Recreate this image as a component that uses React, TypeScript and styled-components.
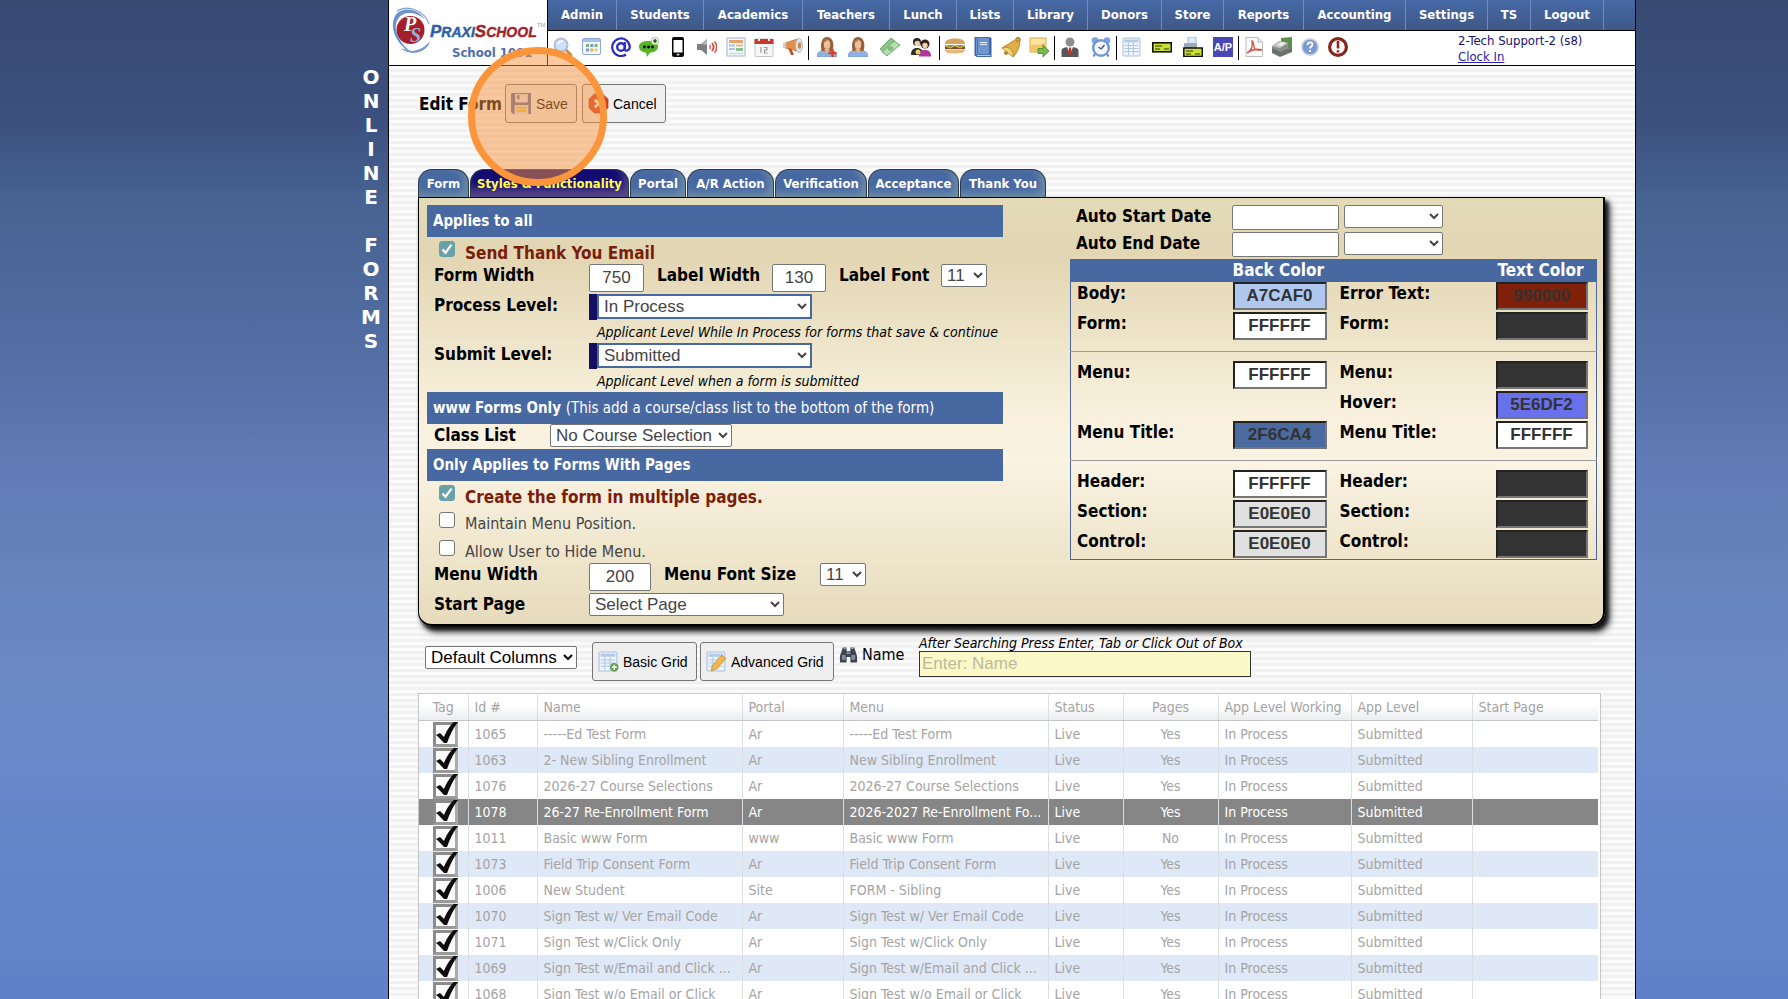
import React from "react";
import styled, { createGlobalStyle, css } from "styled-components";

const TAHOMA = `Tahoma, "DejaVu Sans Condensed", "DejaVu Sans", sans-serif`;
const ARIAL = `"Liberation Sans", Arial, sans-serif`;
const BLUE = "#4868a2";

const Global = createGlobalStyle`
  *, *::before, *::after { box-sizing: border-box; }
  body { margin: 0; font-family: ${TAHOMA}; font-size: 14px; color: #000; }
`;

/* ---------- page frame ---------- */

const Page = styled.div`
  position: relative;
  display: grid;
  grid-template-columns: 388px minmax(0, 1fr) 152px;
  height: 100vh;
  overflow: hidden;
  background: linear-gradient(#364a72 0%, #3c507f 12%, #466391 20%, #536ea3 35%, #607bb7 47%, #6784bf 58%, #6a8ac6 70%, #6686ca 82%, #6080c9 100%);
`;

const SideTitle = styled.h1`
  margin: 0;
  padding: 65px 6px 0 0;
  display: flex;
  flex-direction: column;
  align-items: flex-end;
  font-family: Verdana, "DejaVu Sans", sans-serif;
  font-size: 20px;
  line-height: 24px;
  color: #fff;
`;

const SideLetter = styled.span`
  width: 22px;
  height: 24px;
  text-align: center;
`;

const Sheet = styled.main`
  border: solid #000;
  border-width: 0 1px;
  background: repeating-linear-gradient(#fafafa 0 3px, #f1f1f1 3px 6px);
  overflow: hidden;
`;

/* ---------- header ---------- */

const Header = styled.header`
  display: grid;
  grid-template-columns: 159px minmax(0, 1fr);
  height: 66px;
  background: #fff;
  border-bottom: 1px solid #000;
`;

const Brand = styled.a`
  display: grid;
  grid-template-columns: 38px 1fr;
  border-right: 1px solid #000;
  padding-left: 3px;
  text-decoration: none;
`;

const BrandText = styled.span`
  display: flex;
  flex-direction: column;
  padding-top: 22px;
`;

const BrandName = styled.span`
  font: italic bold 14px/20px ${ARIAL};
  color: #2c5fa6;
  white-space: nowrap;
  -webkit-text-stroke: 0.4px;
  b { font-size: 17px; }
  i { color: #a31f2a; }
  sup { font: 6px/6px ${ARIAL}; color: #8aa6cc; -webkit-text-stroke: 0; vertical-align: top; }
`;

const SchoolName = styled.span`
  padding-left: 22px;
  font-size: 13px;
  font-weight: bold;
  line-height: 22px;
  color: #4c6fb0;
`;

const MenuBar = styled.nav`
  display: grid;
  grid-template-columns: 69px 87px 99px 87px 67px 57px 74px 74px 62px 80px 102px 82px 43px 73px 1fr;
  height: 31px;
  background: linear-gradient(#4669a6, #3f5887);
  border-bottom: 1px solid #000;
`;

const MenuLink = styled.a`
  display: flex;
  align-items: center;
  justify-content: center;
  padding-bottom: 2px;
  border-right: 1px solid #6f8cc0;
  font-size: 13px;
  font-weight: bold;
  color: #fff;
  text-decoration: none;
`;

const ToolBar = styled.div`
  display: flex;
  align-items: flex-start;
  height: 34px;
`;

const ToolGroup = styled.div<{ $w: number; $pad?: number }>`
  display: flex;
  justify-content: space-between;
  width: ${(p) => p.$w}px;
  padding: 6px ${(p) => p.$pad ?? 5}px 0;
`;

const ToolRule = styled.i`
  width: 1px;
  height: 24px;
  margin-top: 5px;
  background: #000;
`;

const IconButton = styled.button`
  width: 20px;
  height: 20px;
  padding: 0;
  border: 0;
  background: none;
  svg { display: block; width: 20px; height: 20px; }
`;

const UserBox = styled.div`
  margin-left: auto;
  width: 177px;
  padding-top: 2px;
  display: flex;
  flex-direction: column;
  font-size: 13px;
  line-height: 16px;
  color: #171270;
  a { color: #2a20b0; }
`;

/* ---------- title row ---------- */

const TitleRow = styled.div`
  display: flex;
  align-items: center;
  gap: 5px;
  padding: 18px 0 0 30px;
`;

const Title = styled.h2`
  margin: 0;
  width: 81px;
  white-space: nowrap;
  font-size: 17px;
  line-height: 20px;
`;

const ActionButton = styled.button<{ $w: number }>`
  display: flex;
  align-items: center;
  gap: 4px;
  width: ${(p) => p.$w}px;
  height: 39px;
  padding: 0 0 0 5px;
  border: 1px solid #767676;
  border-radius: 3px;
  background: #efefef;
  font: 14px/16px ${ARIAL};
  color: #000;
  white-space: nowrap;
  svg { width: 21px; height: 21px; flex: none; }
`;

/* ---------- tabs ---------- */

const Tabs = styled.div`
  display: grid;
  grid-template-columns: 51px 159px 56px 87px 92px 91px 86px;
  gap: 1px;
  margin: 46px 0 0 29px;
`;

const Tab = styled.button<{ $on?: boolean }>`
  height: 28px;
  padding: 0;
  border: 1px solid #2a3a4c;
  border-bottom: 0;
  border-radius: 14px 14px 0 0;
  background: ${BLUE};
  box-shadow: inset -4px -4px 8px #7090a8;
  font: bold 13px/26px ${TAHOMA};
  color: #fff;
  white-space: nowrap;
  ${(p) =>
    p.$on &&
    css`
      background: #140c70;
      box-shadow: inset -4px -8px 10px #57498a;
      color: #ffff4d;
    `}
`;

const Panel = styled.section`
  display: flex;
  justify-content: space-between;
  margin: 0 30px 0 29px;
  padding: 7px 6px 8px 8px;
  border: 1px solid #000;
  border-width: 1px 2px 2px 1px;
  border-radius: 0 0 14px 14px;
  background: linear-gradient(#e3dab8 0%, #e2d6b3 14%, #f8f0dc 50%, #faf3e2 62%, #e6dbbb 100%);
  box-shadow: 3px 4px 4px #111, 5px 6px 7px #555;
`;

const LeftCol = styled.div`
  width: 576px;
`;

const SectionBar = styled.h3`
  margin: 0;
  height: 32px;
  padding-left: 6px;
  background: ${BLUE};
  color: #fff;
  font-size: 15px;
  line-height: 33px;
  span { font-weight: normal; }
`;

const Row = styled.div<{ $h: number }>`
  display: flex;
  align-items: flex-start;
  height: ${(p) => p.$h}px;
  padding-left: 7px;
`;

const Label = styled.label<{ $w?: number }>`
  flex: none;
  width: ${(p) => (p.$w ? p.$w + "px" : "auto")};
  font-size: 17px;
  font-weight: bold;
  line-height: 22px;
  white-space: nowrap;
`;

const CheckLabel = styled.label<{ $strong?: boolean }>`
  display: flex;
  align-items: flex-start;
  gap: 10px;
  padding: 4px 0 0 5px;
  font-size: ${(p) => (p.$strong ? 17 : 16)}px;
  line-height: 24px;
  color: #444;
  ${(p) => p.$strong && css`font-weight: bold; color: #7a1d0a;`}
`;

const Check = styled.input`
  appearance: none;
  grid-area: 1 / 1;
  width: 16px;
  height: 16px;
  margin: 0;
  border: 1px solid #767676;
  border-radius: 3px;
  background: #fff;
  &:checked { background: #69a1ab; border-color: #69a1ab; }
`;

const CheckBox = styled.span`
  display: grid;
  svg { grid-area: 1 / 1; width: 16px; height: 16px; pointer-events: none; }
`;

const NumberBox = styled.input<{ $w: number }>`
  width: ${(p) => p.$w}px;
  height: 28px;
  margin-right: 13px;
  padding: 0;
  border: 1px solid #767676;
  border-radius: 2px;
  font: 17px ${ARIAL};
  color: #444;
  text-align: center;
`;

const Select = styled.select<{ $w: number; $dark?: boolean }>`
  width: ${(p) => p.$w}px;
  height: 23px;
  padding: 0 0 0 1px;
  border: 1px solid #767676;
  border-radius: 2px;
  background-color: #fff;
  font: 17px ${ARIAL};
  color: ${(p) => (p.$dark ? "#000" : "#444")};
`;

const LevelWrap = styled.span`
  display: flex;
  height: 26px;
  border-left: 8px solid #150e62;
`;

const LevelSelect = styled(Select)`
  height: 25px;
  border: 2px solid ${BLUE};
  border-radius: 0;
`;

const Note = styled.p`
  margin: 0;
  padding: 3px 0 0 170px;
  height: 23px;
  font-size: 14px;
  font-style: italic;
  line-height: 18px;
  white-space: nowrap;
`;

/* ---------- colour settings ---------- */

const RightCol = styled.div`
  width: 527px;
`;

const DateRow = styled.div`
  display: flex;
  align-items: flex-start;
  gap: 5px;
  height: 27px;
  padding-left: 6px;
`;

const DateBox = styled.input`
  width: 107px;
  height: 25px;
  border: 1px solid #767676;
  border-radius: 2px;
`;

const ColorTable = styled.table`
  width: 100%;
  table-layout: fixed;
  border-collapse: collapse;
  border: 1px solid ${BLUE};
  th, td { padding: 0; text-align: left; vertical-align: top; }
  th { height: 22px; background: ${BLUE}; color: #fff; font-size: 17px; line-height: 21px; white-space: nowrap; }
  th:last-child { padding-left: 2px; }
  tr.first > td { border-top: 1px solid #999; padding-top: 9px; height: 39px; }
  tr.last > td { height: 40px; }
  td { height: 30px; }
`;

const ColorLabel = styled.label`
  padding-left: 6px;
  font-size: 17px;
  font-weight: bold;
  line-height: 22px;
`;

const ColorBox = styled.input<{ $bg: string; $short?: boolean }>`
  display: block;
  width: ${(p) => (p.$short ? 92 : 94)}px;
  height: 28px;
  padding: 0;
  border: 2px solid;
  border-color: #222 #767676 #767676 #222;
  background: ${(p) => p.$bg};
  font: bold 17px ${ARIAL};
  color: #333;
  text-align: center;
`;

/* ---------- grid controls ---------- */

const GridBar = styled.div`
  display: flex;
  align-items: flex-start;
  height: 67px;
  padding: 9px 0 0 36px;
`;

const ColumnsSelect = styled(Select)`
  margin: 11px 15px 0 0;
`;

const GridButtons = styled.div`
  display: flex;
  gap: 3px;
  margin: 7px 5px 0 0;
`;

const NameLabel = styled.label`
  display: flex;
  gap: 4px;
  width: 80px;
  margin-top: 9px;
  font-size: 16px;
  line-height: 22px;
  svg { width: 19px; height: 22px; }
`;

const Search = styled.div`
  width: 332px;
`;

const SearchHint = styled.div`
  font-size: 14px;
  font-style: italic;
  line-height: 16px;
  white-space: nowrap;
`;

const SearchBox = styled.input`
  display: block;
  width: 100%;
  height: 26px;
  padding: 0 2px;
  border: 1px solid #333;
  background: #fcf9c8;
  font: 17px ${ARIAL};
  &::placeholder { color: #bbb99a; }
`;

/* ---------- data grid ---------- */

const GridFrame = styled.div`
  margin: 0 34px 0 29px;
  padding: 1px 2px 0 0;
  border: 1px solid #c4c6c8;
  background: #fff;
`;

const DataTable = styled.table`
  width: 100%;
  table-layout: fixed;
  border-collapse: collapse;
  font-size: 14px;
  color: #a4a4a4;
  th { height: 25px; padding: 0 6px; font-weight: normal; text-align: left; background: linear-gradient(#fff 40%, #ebedef); border-bottom: 1px solid #c4c6c8; white-space: nowrap; }
  td { height: 26px; padding: 0 6px; overflow: hidden; text-overflow: ellipsis; white-space: nowrap; line-height: 18px; }
  th + th, td + td { border-left: 1px solid #dcdfe2; }
  th:nth-child(1), th:nth-child(7), td:nth-child(7) { text-align: center; }
  td:nth-child(1) { padding: 0 0 0 14px; }
`;

const DataRow = styled.tr<{ $alt?: boolean; $on?: boolean }>`
  background: ${(p) => (p.$on ? "#868686" : p.$alt ? "#dfe8f6" : "#fff")};
  color: ${(p) => (p.$on ? "#fff" : "inherit")};
`;

const TagBox = styled.span`
  display: grid;
  width: 26px;
  height: 26px;
  svg { grid-area: 1 / 1; width: 26px; height: 26px; pointer-events: none; }
`;

const TagCheck = styled.input`
  appearance: none;
  grid-area: 1 / 1;
  width: 25px;
  height: 25px;
  margin: 1px 0 0 0;
  border: 3px solid;
  border-color: #8c8c8c #aaa #9a9a9a #8c8c8c;
  background: #fafafa;
`;

/* ---------- click highlight ---------- */

const ClickRing = styled.div`
  position: absolute;
  left: 468px;
  top: 47px;
  width: 139px;
  height: 139px;
  border: 7px solid #fb953c;
  border-radius: 50%;
  background: rgba(247, 148, 64, 0.5);
  pointer-events: none;
`;

/* ---------- icons ---------- */

const Svg = ({ children, box = "0 0 20 20" }: { children: React.ReactNode; box?: string }) => (
  <svg viewBox={box} aria-hidden="true">{children}</svg>
);

const Woman = ({ plus }: { plus?: boolean }) => (
  <Svg>
    <path d="M0 20c0-5 3-7 10-7s10 2 10 7z" fill="#8fb0e2" stroke="#6c8fc6" strokeWidth=".6" />
    <path d="M4.500 14C3 6 5 0 10 0s8 6 5.500 14z" fill="#95603c" />
    <path d="M7 12l3 4 3-4z" fill="#e9b68a" />
    <ellipse cx="10" cy="7.500" rx="3.200" ry="4.500" fill="#eebf98" />
    <path d="M6 6c2-1 4-2 5-4 1 2 2 3 3 4-1-5-7-6-8 0z" fill="#a87550" />
    {plus && <path d="M15.500 12v8M11.500 16h8" stroke="#e23a2e" strokeWidth="2.400" />}
  </Svg>
);

const GridSheet = ({ children }: { children?: React.ReactNode }) => (
  <Svg>
    <rect x="1" y="1" width="17" height="18" rx="1" fill="#eef4fc" stroke="#a9bfdd" />
    <rect x="2.500" y="2.500" width="14" height="3" fill="#b5cbe8" />
    <path d="M2.500 8.500h14M2.500 11.500h14M2.500 14.500h14M6.500 6v12M11.500 6v12" stroke="#b3c7e2" />
    {children}
  </Svg>
);

const icons: Record<string, React.ReactNode> = {
  Search: (
    <Svg><path d="M12 12l6 6" stroke="#c98d4a" strokeWidth="3" strokeLinecap="round" /><circle cx="8" cy="8" r="6.500" fill="#cfe1f7" stroke="#aebfda" strokeWidth="2" /><path d="M5 7c1-3 3-3 5-3" stroke="#fff" strokeWidth="1.500" fill="none" /></Svg>
  ),
  Dashboard: (
    <Svg><rect x=".5" y="1.500" width="18" height="16" rx="1.500" fill="#f4f8fe" stroke="#8aa8d8" /><path d="M1 3.500h17" stroke="#a8c0e4" strokeWidth="3" /><path d="M4 8.500h3M12.500 8.500h3" stroke="#7fb37a" strokeWidth="3" /><path d="M8.300 8.500h3M4 13h3" stroke="#6f9be0" strokeWidth="3" /><path d="M8.300 13h3" stroke="#e2b24d" strokeWidth="3" /><path d="M12.500 13h3" stroke="#e0d27a" strokeWidth="3" /></Svg>
  ),
  Email: (
    <Svg><circle cx="10" cy="10" r="3.800" fill="none" stroke="#2c2cc4" strokeWidth="2.400" /><path d="M13.800 5v7c0 3 5 2 5-2.500A8.800 8.800 0 1 0 15 17.500" fill="none" stroke="#2c2cc4" strokeWidth="2.200" /></Svg>
  ),
  Chat: (
    <Svg><path d="M9.500 4C4 4 0 6 0 9.500S3 15.500 7 15.500l1 4.500 3-4.500c5 0 8-2.500 8-6S15 4 9.500 4z" fill="#55b524" /><circle cx="5.500" cy="10" r="1.400" /><circle cx="9.500" cy="10" r="1.400" /><circle cx="13.500" cy="10" r="1.400" /><circle cx="16" cy="4" r="3.800" fill="#e8f5df" stroke="#7cb85c" strokeWidth=".6" /><path d="M16 2v4M14 4h4" stroke="#222" strokeWidth="1.200" /></Svg>
  ),
  Phone: (
    <Svg><rect x="4" y="0" width="12" height="20" rx="2" fill="#0b0b0b" /><rect x="5.500" y="3" width="9" height="12.500" fill="#fff" /><rect x="8.500" y="16.800" width="3" height="1.600" rx=".8" fill="#ddd" /></Svg>
  ),
  Speaker: (
    <Svg><path d="M0 7h4l6-5v16l-6-5H0z" fill="#7d7f82" /><path d="M4 7l6-5v6z" fill="#b2b4b6" /><path d="M12.500 8c1 1 1 3 0 4" stroke="#e07d76" strokeWidth="1.800" fill="none" /><path d="M15 6c2 2.500 2 5.500 0 8" stroke="#d9544c" strokeWidth="2" fill="none" /><path d="M17.500 4.500c3 3 3 8 0 11" stroke="#d9544c" strokeWidth="1.600" fill="none" /></Svg>
  ),
  Schedule: (
    <Svg><rect x="1" y="1" width="18" height="18" fill="#f6f9fd" stroke="#9cb4d8" /><path d="M3 4.500h14" stroke="#e8a468" strokeWidth="3" /><path d="M3 8.500h6M3 12h6" stroke="#a8c2e6" strokeWidth="2" /><path d="M10 8.500h7" stroke="#ecb78a" strokeWidth="2" /><path d="M10 12.500h7" stroke="#8cbf8e" strokeWidth="3" /><path d="M3 16.500h14" stroke="#c9d7ea" strokeWidth="1.500" /></Svg>
  ),
  Calendar: (
    <Svg><rect x="1" y="2" width="18" height="17.500" rx="1" fill="#f7f7f7" stroke="#c4c4c4" /><path d="M.5 2h19v5H.5z" fill="#c9382a" /><path d="M5 0v4M15 0v4" stroke="#eee" strokeWidth="2" /><path d="M7 10v6M10 10.500h3v2.500h-2.500v3h3" stroke="#999" strokeWidth="1.200" fill="none" /></Svg>
  ),
  Announce: (
    <Svg><path d="M2 6l12-4v12L2 11z" fill="#e2924c" stroke="#b5672c" strokeWidth=".6" /><path d="M0 6h3v5H0z" fill="#c7cdd4" /><path d="M5 11l3 7h3l-2.500-6z" fill="#b4552a" /><ellipse cx="16" cy="8.500" rx="3.500" ry="7" fill="#dfe4ea" stroke="#a5adb6" strokeWidth=".8" /><ellipse cx="16.500" cy="8.500" rx="1.600" ry="3.200" fill="#c9874e" /></Svg>
  ),
  "Add Parent": <Woman plus />,
  Parent: <Woman />,
  Money: (
    <Svg><path d="M0 12L11 1l4 3L4 15z" fill="#8cc48a" stroke="#5d9c60" strokeWidth=".8" /><path d="M2 15L14 4l6 4L7 19z" fill="#b4dcae" stroke="#5d9c60" strokeWidth=".8" /><ellipse cx="10.500" cy="11.500" rx="2.800" ry="2.200" fill="#7db97c" /></Svg>
  ),
  Family: (
    <Svg><circle cx="6" cy="5" r="4" fill="#2b2320" /><circle cx="6.300" cy="6.500" r="2.700" fill="#f0cfae" /><path d="M0 18c0-5 2-7 6-7s6 2 6 7z" fill="#2d2d33" /><circle cx="14" cy="7" r="4.500" fill="#33231c" /><circle cx="14" cy="8.500" r="2.700" fill="#f3d2b0" /><path d="M8 19.500c0-5 2-6.500 6-6.500s6 2 6 6.500z" fill="#b2349e" /><circle cx="7" cy="15" r="2.500" fill="#f0d05a" /></Svg>
  ),
  Burger: (
    <Svg><path d="M0 7c0-4 4-5.500 10-5.500S20 3 20 7z" fill="#d9a35c" /><path d="M0 8h20v2H0z" fill="#7fae4a" /><path d="M0 9.500h20v2.500H0z" fill="#7a4a28" /><path d="M0 8.500l5 2.500 5-2.500 5 2.500 5-2.500" fill="none" stroke="#f0d050" /><path d="M0 12.500h20c0 3-3 4-10 4S0 15.500 0 12.500z" fill="#e2b878" /></Svg>
  ),
  Library: (
    <Svg><path d="M1.500 0h15l2 1v19H4l-2.500-1.500z" fill="#3c66a4" /><path d="M3 .8h13v16.500H3z" fill="#6d96d0" /><path d="M4.500 .8v16.500" stroke="#4a72ae" /><path d="M7 5.500h7M7 7.500h7" stroke="#e3edf9" /><path d="M4 18.500h13.500" stroke="#dde6f2" strokeWidth=".8" /></Svg>
  ),
  Bell: (
    <Svg><path d="M17 1L1 11l11 9c3-3 7-8 7-18z" fill="#dfae48" stroke="#a8761e" strokeWidth=".8" /><path d="M1.500 11C6 8 14 13 12 19.500" fill="#f2d27a" stroke="#a8761e" strokeWidth=".8" /><circle cx="17" cy="2.500" r="2" fill="none" stroke="#b5842a" strokeWidth="1.200" /><circle cx="5" cy="16" r="2" fill="#b5842a" /></Svg>
  ),
  Export: (
    <Svg><rect x="1" y="1" width="16" height="14" fill="#fbe3a0" stroke="#dbaa50" /><path d="M1 10c4-5 8 0 16-5v10H1z" fill="#f3c46a" /><path d="M9 11.500h5V8l6 6-6 6v-3.500H9z" fill="#78b84c" stroke="#3f8a22" strokeWidth=".8" /></Svg>
  ),
  Staff: (
    <Svg><circle cx="10" cy="5" r="4.500" fill="#8b8d90" /><path d="M1.500 20v-6c0-3 3-4 8.500-4s8.500 1 8.500 4v6z" fill="#55575a" /><path d="M7 10h6l-3 8z" fill="#f2f2f2" /><path d="M9.200 10.500h1.600l1 5-1.800 3-1.800-3z" fill="#cf2a26" /></Svg>
  ),
  Alarm: (
    <Svg><circle cx="4" cy="3.500" r="3.300" fill="#7da2dc" /><circle cx="16" cy="3.500" r="3.300" fill="#7da2dc" /><path d="M4 17l-1.500 2.500M16 17l1.500 2.500" stroke="#5e83bd" strokeWidth="2" /><circle cx="10" cy="11" r="7.800" fill="#f4f9ff" stroke="#6f97d3" strokeWidth="2.400" /><path d="M10 12l3.500-4M10 12L7.500 10" stroke="#3b5272" strokeWidth="1.300" /></Svg>
  ),
  Ledger: <GridSheet />,
  Check: (
    <Svg><rect x=".8" y="5.800" width="18.500" height="9" fill="#c9e02c" stroke="#111" strokeWidth="1.600" /><path d="M3 9h7M3 12h5M12 12h5" stroke="#333" strokeWidth="1.200" /></Svg>
  ),
  "Print Check": (
    <Svg><path d="M5 0h8v8H5z" fill="#dce9f8" stroke="#8fa5c2" strokeWidth=".8" /><rect x="1" y="6" width="13" height="7" rx="1" fill="#9aa8b8" /><rect x=".8" y="11" width="18.500" height="8.500" fill="#c9e02c" stroke="#111" strokeWidth="1.500" /><path d="M3 14h7M3 17h5M12 17h5" stroke="#333" strokeWidth="1.200" /></Svg>
  ),
  "Accounts Payable": (
    <Svg><rect width="20" height="20" fill="#4a48b4" /><text x="10" y="14" textAnchor="middle" fontFamily="Liberation Sans, sans-serif" fontWeight="bold" fontSize="11" fill="#fff">A/P</text></Svg>
  ),
  Pdf: (
    <Svg><path d="M2 .5h12l4.500 4.500v14.500H2z" fill="#fafafa" stroke="#bdbdbd" /><path d="M14 .5v4.500h4.500" fill="#e4e4e4" stroke="#bdbdbd" /><path d="M8 4c2 0 1 6 3 8s4 1 7 1c-6-2-11 0-15 3 4-2 6-6 5-12z" fill="none" stroke="#cf5a50" strokeWidth="1.400" /></Svg>
  ),
  Scanner: (
    <Svg><path d="M9 1l11-1v11L9 13z" fill="#5a8f4c" /><path d="M0 9l7-5 9 2v7l-9 5-7-4z" fill="#8b8f8c" /><path d="M0 9l7-5 9 2-8 5z" fill="#c3c7c3" /><path d="M0 11l8 4 12-5v5l-12 5-8-4z" fill="#6c716d" /><path d="M5 8l5-3 4 1-5 3z" fill="#eef3ea" /></Svg>
  ),
  Help: (
    <Svg><circle cx="10" cy="10" r="9" fill="#c8d2e2" /><circle cx="10" cy="10" r="7.300" fill="#7b9bd0" /><path d="M7.500 8c0-3.500 5-3.500 5-.5 0 2-2.500 2-2.500 4M10 13v2" stroke="#fff" strokeWidth="1.800" fill="none" /></Svg>
  ),
  Alert: (
    <Svg><circle cx="10" cy="10" r="8.400" fill="#fff" stroke="#86261a" strokeWidth="3.200" /><path d="M10 4v7.500M10 13.200v2.400" stroke="#86261a" strokeWidth="2.600" /></Svg>
  ),
};

const toolGroups: { w: number; pad?: number; tools: string[] }[] = [
  { w: 260, tools: ["Search", "Dashboard", "Email", "Chat", "Phone", "Speaker", "Schedule", "Calendar", "Announce"] },
  { w: 130, pad: 8, tools: ["Add Parent", "Parent", "Money", "Family"] },
  { w: 114, tools: ["Burger", "Library", "Bell", "Export"] },
  { w: 61, tools: ["Staff", "Alarm"] },
  { w: 121, tools: ["Ledger", "Check", "Print Check", "Accounts Payable"] },
  { w: 114, tools: ["Pdf", "Scanner", "Help", "Alert"] },
];

const EmblemSvg = styled.svg`
  width: 40px;
  height: 48px;
  margin-top: 7px;
  overflow: visible;
`;

const Emblem = () => (
  <EmblemSvg viewBox="0 0 40 48" aria-hidden="true">
    <ellipse cx="18.500" cy="23" rx="14" ry="14" fill="#a51f2b" />
    <path d="M33 13C27 1 9-1 3 9-3 20 4 39 21 46 7 37 0 21 6 12 11 4 25 4 33 13z" fill="#6d93cc" />
    <path d="M38 34C34 47 18 49 8 41c10 5 22 4 30-7z" fill="#4c7abf" />
    <path d="M37 17C33 4 16-3 5 4M35 38C28 46 18 46 12 42" stroke="#7ea3d6" strokeWidth="1.200" fill="none" />
    <text fontFamily="Liberation Serif, serif" fontWeight="bold" fontStyle="italic" fontSize="20">
      <tspan x="12" y="24" fill="#fff">P</tspan>
      <tspan x="18" y="35" fill="#8fb0dd">S</tspan>
    </text>
  </EmblemSvg>
);

const SaveIcon = () => (
  <Svg>
    <path d="M1 0h18v20H2l-2-2V1z" fill="#5e6ba4" />
    <rect x="4" y="1" width="12" height="8" fill="#e4e4ee" />
    <rect x="6" y="2" width="2" height="4" fill="#5e6ba4" />
    <rect x="3.500" y="11.500" width="13" height="8.500" fill="#dfe3ee" />
    <path d="M5 14h10M5 17h10" stroke="#e6c34c" strokeWidth="2" />
  </Svg>
);

const CancelIcon = () => (
  <Svg>
    <path d="M6 1h8l5 5v8l-5 5H6l-5-5V6z" fill="#dc3a22" stroke="#b92c18" strokeWidth=".8" />
    <path d="M6.500 6.500l7 7M13.500 6.500l-7 7" stroke="#fff" strokeWidth="2.600" />
  </Svg>
);

const BinocularsIcon = () => (
  <Svg>
    <path d="M4 2h4v4h4V2h4l3 9v7h-7v-6H8v6H1v-7z" fill="#3c4450" />
    <path d="M3 10h4v5H3zM13 10h4v5h-4z" fill="#7f8b9c" />
    <path d="M5 3h2M13 3h2M8 8h4" stroke="#aab4c2" strokeWidth="1.500" />
  </Svg>
);

/* ---------- small parts ---------- */

const Tick = ({ checked, strong, children }: { checked?: boolean; strong?: boolean; children: React.ReactNode }) => (
  <CheckLabel $strong={strong}>
    <CheckBox>
      <Check type="checkbox" defaultChecked={checked} />
      {checked && (
        <svg viewBox="0 0 16 16"><path d="M3.500 8.500l3 3.200 6-8" fill="none" stroke="#fff" strokeWidth="2.200" /></svg>
      )}
    </CheckBox>
    <span>{children}</span>
  </CheckLabel>
);

type Swatch = { label: string; value: string; bg: string } | null;
type Pair = { back: Swatch; text: Swatch; edge?: "first" | "last" };

const swatches: Pair[] = [
  { back: { label: "Body:", value: "A7CAF0", bg: "#b0c8f0" }, text: { label: "Error Text:", value: "990000", bg: "#80200a" } },
  { back: { label: "Form:", value: "FFFFFF", bg: "#fff" }, text: { label: "Form:", value: "", bg: "#333" }, edge: "last" },
  { back: { label: "Menu:", value: "FFFFFF", bg: "#fff" }, text: { label: "Menu:", value: "", bg: "#333" }, edge: "first" },
  { back: null, text: { label: "Hover:", value: "5E6DF2", bg: "#6870ea" } },
  { back: { label: "Menu Title:", value: "2F6CA4", bg: "#4a6aa0" }, text: { label: "Menu Title:", value: "FFFFFF", bg: "#fff" }, edge: "last" },
  { back: { label: "Header:", value: "FFFFFF", bg: "#fff" }, text: { label: "Header:", value: "", bg: "#333" }, edge: "first" },
  { back: { label: "Section:", value: "E0E0E0", bg: "#e0e0e0" }, text: { label: "Section:", value: "", bg: "#333" } },
  { back: { label: "Control:", value: "E0E0E0", bg: "#e0e0e0" }, text: { label: "Control:", value: "", bg: "#333" } },
];

const SwatchCells = ({ swatch, id, short }: { swatch: Swatch; id: string; short?: boolean }) => (
  <>
    <td>{swatch && <ColorLabel htmlFor={id}>{swatch.label}</ColorLabel>}</td>
    <td>{swatch && <ColorBox id={id} $bg={swatch.bg} $short={short} defaultValue={swatch.value} />}</td>
  </>
);

const menu = ["Admin", "Students", "Academics", "Teachers", "Lunch", "Lists", "Library", "Donors", "Store", "Reports", "Accounting", "Settings", "TS", "Logout"];
const tabs = ["Form", "Styles & Functionality", "Portal", "A/R Action", "Verification", "Acceptance", "Thank You"];
const columns = ["Tag", "Id #", "Name", "Portal", "Menu", "Status", "Pages", "App Level Working", "App Level", "Start Page"];
const columnWidths = [49, 69, 205, 101, 205, 75, 95, 133, 121];

const forms: [string, string, string, string, string][] = [
  ["1065", "-----Ed Test Form", "Ar", "-----Ed Test Form", "Yes"],
  ["1063", "2- New Sibling Enrollment", "Ar", "New Sibling Enrollment", "Yes"],
  ["1076", "2026-27 Course Selections", "Ar", "2026-27 Course Selections", "Yes"],
  ["1078", "26-27 Re-Enrollment Form", "Ar", "2026-2027 Re-Enrollment Fo...", "Yes"],
  ["1011", "Basic www Form", "www", "Basic www Form", "No"],
  ["1073", "Field Trip Consent Form", "Ar", "Field Trip Consent Form", "Yes"],
  ["1006", "New Student", "Site", "FORM - Sibling", "Yes"],
  ["1070", "Sign Test w/ Ver Email Code", "Ar", "Sign Test w/ Ver Email Code", "Yes"],
  ["1071", "Sign Test w/Click Only", "Ar", "Sign Test w/Click Only", "Yes"],
  ["1069", "Sign Test w/Email and Click ...", "Ar", "Sign Test w/Email and Click ...", "Yes"],
  ["1068", "Sign Test w/o Email or Click", "Ar", "Sign Test w/o Email or Click", "Yes"],
];

export default function App() {
  return (
    <>
      <Global />
      <Page>
        <SideTitle aria-label="Online Forms">
          {"ONLINE FORMS".split("").map((c, i) => <SideLetter key={i}>{c}</SideLetter>)}
        </SideTitle>

        <Sheet>
          <Header>
            <Brand href="#">
              <Emblem />
              <BrandText>
                <BrandName><b>P</b>RAXI<i><b>S</b>CHOOL</i><sup>TM</sup></BrandName>
                <SchoolName>School 1001</SchoolName>
              </BrandText>
            </Brand>
            <div>
              <MenuBar>
                {menu.map((m) => <MenuLink key={m} href="#">{m}</MenuLink>)}
              </MenuBar>
              <ToolBar>
                {toolGroups.map((g, i) => (
                  <React.Fragment key={i}>
                    {i > 0 && <ToolRule />}
                    <ToolGroup $w={g.w} $pad={g.pad}>
                      {g.tools.map((t) => <IconButton key={t} aria-label={t}>{icons[t]}</IconButton>)}
                    </ToolGroup>
                  </React.Fragment>
                ))}
                <UserBox>
                  <span>2-Tech Support-2 (s8)</span>
                  <a href="#">Clock In</a>
                </UserBox>
              </ToolBar>
            </div>
          </Header>

          <TitleRow>
            <Title>Edit Form</Title>
            <ActionButton $w={72}><SaveIcon />Save</ActionButton>
            <ActionButton $w={84}><CancelIcon />Cancel</ActionButton>
          </TitleRow>

          <Tabs role="tablist">
            {tabs.map((t, i) => <Tab key={t} role="tab" aria-selected={i === 1} $on={i === 1}>{t}</Tab>)}
          </Tabs>

          <Panel>
            <LeftCol>
              <SectionBar>Applies to all</SectionBar>
              <Row $h={27}><Tick checked strong>Send Thank You Email</Tick></Row>
              <Row $h={30}>
                <Label $w={155} htmlFor="formWidth">Form Width</Label>
                <NumberBox id="formWidth" $w={55} defaultValue="750" />
                <Label $w={115} htmlFor="labelWidth">Label Width</Label>
                <NumberBox id="labelWidth" $w={54} defaultValue="130" />
                <Label $w={102} htmlFor="labelFont">Label Font</Label>
                <Select id="labelFont" $w={46}><option>11</option></Select>
              </Row>
              <Row $h={26}>
                <Label $w={155} htmlFor="processLevel">Process Level:</Label>
                <LevelWrap><LevelSelect id="processLevel" $w={215}><option>In Process</option></LevelSelect></LevelWrap>
              </Row>
              <Note>Applicant Level While In Process for forms that save &amp; continue</Note>
              <Row $h={26}>
                <Label $w={155} htmlFor="submitLevel">Submit Level:</Label>
                <LevelWrap><LevelSelect id="submitLevel" $w={215}><option>Submitted</option></LevelSelect></LevelWrap>
              </Row>
              <Note>Applicant Level when a form is submitted</Note>
              <SectionBar>www Forms Only <span>(This add a course/class list to the bottom of the form)</span></SectionBar>
              <Row $h={25}>
                <Label $w={116} htmlFor="classList">Class List</Label>
                <Select id="classList" $w={182}><option>No Course Selection</option></Select>
              </Row>
              <SectionBar>Only Applies to Forms With Pages</SectionBar>
              <Row $h={27}><Tick checked strong>Create the form in multiple pages.</Tick></Row>
              <Row $h={28}><Tick>Maintain Menu Position.</Tick></Row>
              <Row $h={27}><Tick>Allow User to Hide Menu.</Tick></Row>
              <Row $h={30}>
                <Label $w={155} htmlFor="menuWidth">Menu Width</Label>
                <NumberBox id="menuWidth" $w={62} defaultValue="200" />
                <Label $w={156} htmlFor="menuFont">Menu Font Size</Label>
                <Select id="menuFont" $w={46}><option>11</option></Select>
              </Row>
              <Row $h={23}>
                <Label $w={155} htmlFor="startPage">Start Page</Label>
                <Select id="startPage" $w={195}><option>Select Page</option></Select>
              </Row>
            </LeftCol>

            <RightCol>
              {["Start", "End"].map((k) => (
                <DateRow key={k}>
                  <Label $w={151} htmlFor={"date" + k}>Auto {k} Date</Label>
                  <DateBox id={"date" + k} />
                  <Select $w={99} aria-label={"Auto " + k + " time"}><option> </option></Select>
                </DateRow>
              ))}
              <ColorTable>
                <colgroup><col style={{ width: 162 }} /><col style={{ width: 101 }} /><col style={{ width: 162 }} /><col /></colgroup>
                <thead>
                  <tr><th /><th>Back Color</th><th /><th>Text Color</th></tr>
                </thead>
                <tbody>
                  {swatches.map((s, i) => (
                    <tr key={i} className={s.edge}>
                      <SwatchCells id={"back" + i} swatch={s.back} />
                      <SwatchCells id={"text" + i} swatch={s.text} short />
                    </tr>
                  ))}
                </tbody>
              </ColorTable>
            </RightCol>
          </Panel>

          <GridBar>
            <ColumnsSelect $w={152} $dark aria-label="Columns"><option>Default Columns</option></ColumnsSelect>
            <GridButtons>
              <ActionButton $w={105}>
                <GridSheet><circle cx="15.500" cy="15.500" r="4" fill="#5f9a4a" /><path d="M15.500 13v5M13 15.500h5" stroke="#fff" strokeWidth="1.500" /></GridSheet>
                Basic Grid
              </ActionButton>
              <ActionButton $w={134}>
                <GridSheet><path d="M5 19l1-5L15 4l4 3-9 10z" fill="#f0b84a" stroke="#c98d2a" strokeWidth=".8" /></GridSheet>
                Advanced Grid
              </ActionButton>
            </GridButtons>
            <NameLabel htmlFor="searchName"><BinocularsIcon />Name</NameLabel>
            <Search>
              <SearchHint>After Searching Press Enter, Tab or Click Out of Box</SearchHint>
              <SearchBox id="searchName" placeholder="Enter: Name" />
            </Search>
          </GridBar>

          <GridFrame>
            <DataTable>
              <colgroup>
                {columnWidths.map((w, i) => <col key={i} style={{ width: w }} />)}
                <col />
              </colgroup>
              <thead>
                <tr>{columns.map((c) => <th key={c}>{c}</th>)}</tr>
              </thead>
              <tbody>
                {forms.map(([id, name, portal, title, pages], i) => (
                  <DataRow key={id} $alt={i % 2 === 1} $on={id === "1078"}>
                    <td>
                      <TagBox>
                        <TagCheck type="checkbox" defaultChecked aria-label={"Tag " + id} />
                        <svg viewBox="0 0 26 26"><path d="M3 14l4-2 4 4C13 11 17 4 21 1h4c-5 6-8 13-11 21h-3C8 19 6 16 3 14z" fill="#0c0c0c" /></svg>
                      </TagBox>
                    </td>
                    <td>{id}</td>
                    <td>{name}</td>
                    <td>{portal}</td>
                    <td>{title}</td>
                    <td>Live</td>
                    <td>{pages}</td>
                    <td>In Process</td>
                    <td>Submitted</td>
                    <td />
                  </DataRow>
                ))}
              </tbody>
            </DataTable>
          </GridFrame>
        </Sheet>
        <ClickRing />
      </Page>
    </>
  );
}
